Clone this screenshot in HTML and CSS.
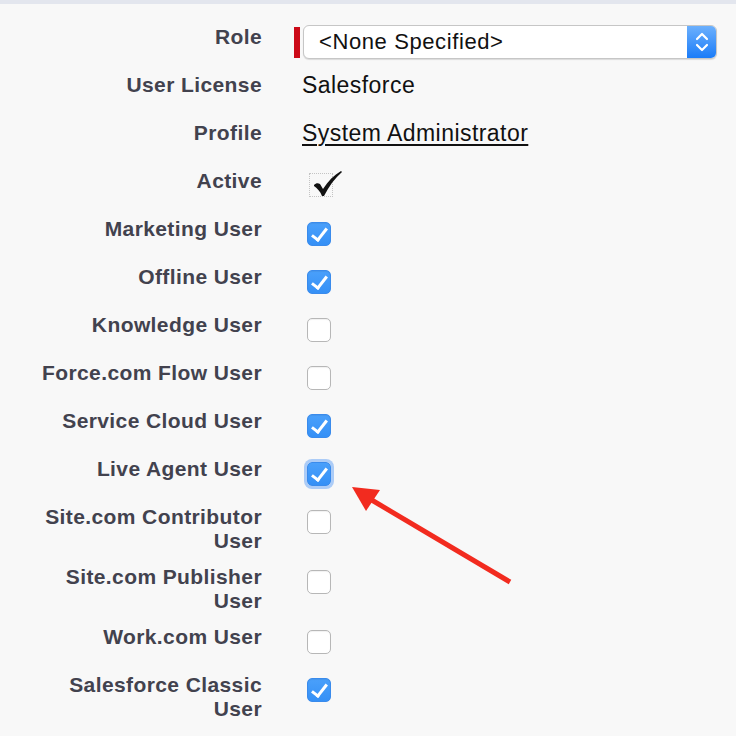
FILE: index.html
```html
<!DOCTYPE html>
<html lang="en">
<head>
  <meta charset="UTF-8">
  <meta name="viewport" content="width=device-width, initial-scale=1.0">
  <title>User Edit</title>
  <link rel="stylesheet" href="styles.css">
</head>
<body>

  <div class="topbar"></div>

  <div class="detail">
    <div class="label">Role</div>
    <div class="value">
      <div class="required">
        <span class="reqbar"></span>
        <div class="select">
          <span class="select-text">&lt;None Specified&gt;</span>
          <span class="select-arrows">
            <svg width="14" height="22" viewBox="0 0 14 22">
              <path d="M2 8 L7 3 L12 8" fill="none" stroke="#fff" stroke-width="2.2" stroke-linecap="round" stroke-linejoin="round"/>
              <path d="M2 14 L7 19 L12 14" fill="none" stroke="#fff" stroke-width="2.2" stroke-linecap="round" stroke-linejoin="round"/>
            </svg>
          </span>
        </div>
      </div>
    </div>

    <div class="label">User License</div>
    <div class="value"><span class="text">Salesforce</span></div>

    <div class="label">Profile</div>
    <div class="value"><a href="#" class="text link">System Administrator</a></div>

    <div class="label">Active</div>
    <div class="value">
      <span class="readonly-check">
        <svg class="bigcheck" width="30" height="28" viewBox="0 0 30 28">
          <path d="M1 15 C3 13 5 13 7 14 L10 19 C15 11 21 5 28 1 L29 2 C22 8 16 16 11 26 L9 26 C7 21 4 18 1 16 Z" fill="#111"/>
        </svg>
      </span>
    </div>

    <div class="label">Marketing User</div>
    <div class="value"><span class="cb checked"></span></div>

    <div class="label">Offline User</div>
    <div class="value"><span class="cb checked"></span></div>

    <div class="label">Knowledge User</div>
    <div class="value"><span class="cb"></span></div>

    <div class="label">Force.com Flow User</div>
    <div class="value"><span class="cb"></span></div>

    <div class="label">Service Cloud User</div>
    <div class="value"><span class="cb checked"></span></div>

    <div class="label">Live Agent User</div>
    <div class="value"><span class="cb checked focused"></span></div>

    <div class="label">Site.com Contributor User</div>
    <div class="value"><span class="cb"></span></div>

    <div class="label">Site.com Publisher User</div>
    <div class="value"><span class="cb"></span></div>

    <div class="label">Work.com User</div>
    <div class="value"><span class="cb"></span></div>

    <div class="label">Salesforce Classic User</div>
    <div class="value"><span class="cb checked"></span></div>

    <div class="label">Mobile Configuration</div>
    <div class="value"></div>
  </div>

  <!-- annotation arrow pointing at the Live Agent checkbox -->
  <svg class="arrow" width="736" height="736" viewBox="0 0 736 736">
    <line x1="510" y1="582" x2="370" y2="499" stroke="#f22b1f" stroke-width="5"/>
    <polygon points="352,487 380,490 366,511" fill="#f22b1f"/>
  </svg>

</body>
</html>
```

FILE: styles.css
```css
html, body {
  margin: 0;
  height: 100%;
}

body {
  background: #f8f8f8;
  font-family: "Liberation Sans", Arial, sans-serif;
  overflow: hidden;
  position: relative;
}

.topbar {
  height: 4px;
  background: #e3e6ee;
}

.detail {
  display: grid;
  grid-template-columns: 232px 420px;
  column-gap: 40px;
  row-gap: 12px;
  padding: 21px 0 0 30px;
}

.label {
  text-align: right;
  font-weight: bold;
  font-size: 21px;
  letter-spacing: 0.4px;
  line-height: 24px;
  color: #42424e;
}

.value {
  min-height: 36px;
}

.text {
  font-size: 23px;
  letter-spacing: 0.45px;
  line-height: 24px;
  color: #111;
}

.link {
  color: #111;
  text-decoration: underline;
  text-underline-offset: 3px;
  text-decoration-thickness: 2px;
}

/* required picklist */
.required {
  display: flex;
  align-items: center;
  gap: 3px;
  margin-left: -8px;
}

.reqbar {
  width: 6px;
  height: 31px;
  background: #cc0a18;
}

.select {
  width: 412px;
  height: 32px;
  display: flex;
  align-items: center;
  justify-content: space-between;
  background: #fff;
  border: 1px solid #c6c6c6;
  border-radius: 6px;
  box-shadow: 0 1px 1px rgba(0, 0, 0, 0.12);
  overflow: hidden;
}

.select-text {
  padding-left: 15px;
  font-size: 22px;
  letter-spacing: 0.6px;
  color: #111;
}

.select-arrows {
  width: 29px;
  height: 100%;
  display: flex;
  align-items: center;
  justify-content: center;
  background: linear-gradient(#6cb0fd, #1b7cf8);
}

/* read-only checkbox image */
.readonly-check {
  position: relative;
  display: inline-block;
  width: 22px;
  height: 22px;
  margin: 4px 0 0 7px;
  border: 1px dotted #c4c4c4;
}

.bigcheck {
  position: absolute;
  left: 3px;
  top: -4px;
}

/* mac style checkboxes */
.cb {
  position: relative;
  display: block;
  box-sizing: border-box;
  width: 24px;
  height: 24px;
  margin: 5px 0 0 5px;
  background: #fff;
  border: 1px solid #b7b7b7;
  border-radius: 5px;
  box-shadow: inset 0 1px 1px rgba(0, 0, 0, 0.06);
}

.cb.checked {
  background: linear-gradient(#4aa0fb, #3590f6);
  border-color: #3a8bec;
}

.cb.checked::after {
  content: "";
  position: absolute;
  left: 7px;
  top: 2px;
  width: 6px;
  height: 13px;
  border: solid #fff;
  border-width: 0 3px 3px 0;
  transform: rotate(38deg);
}

.cb.focused {
  box-shadow: 0 0 0 3px rgba(95, 160, 245, 0.5);
}

.arrow {
  position: absolute;
  left: 0;
  top: 0;
  pointer-events: none;
}
```
